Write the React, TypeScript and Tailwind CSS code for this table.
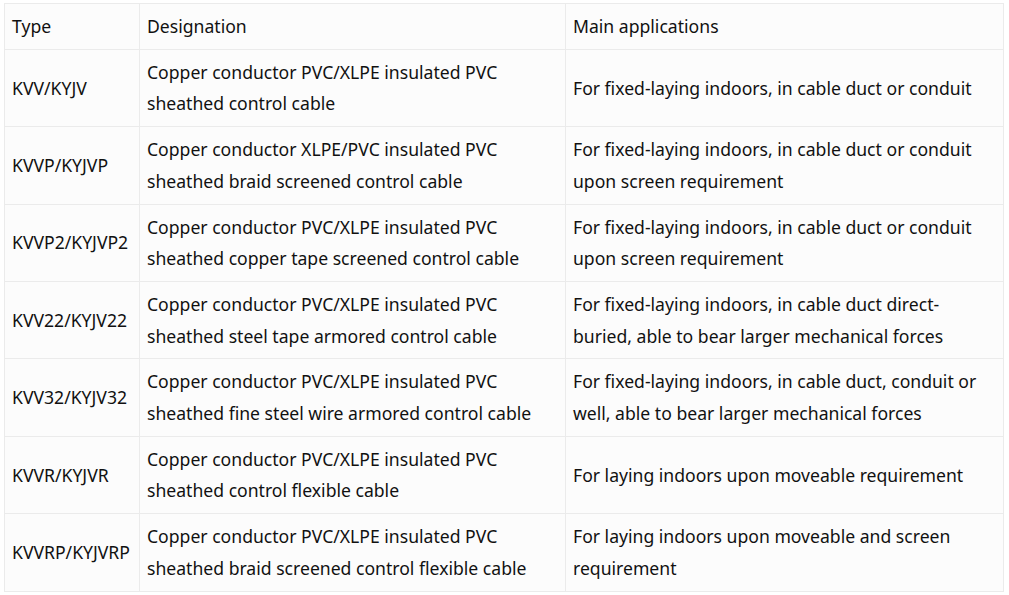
const rows: [string, string, string][] = [
  ['KVV/KYJV', 'Copper conductor PVC/XLPE insulated PVC sheathed control cable', 'For fixed-laying indoors, in cable duct or conduit'],
  ['KVVP/KYJVP', 'Copper conductor XLPE/PVC insulated PVC sheathed braid screened control cable', 'For fixed-laying indoors, in cable duct or conduit upon screen requirement'],
  ['KVVP2/KYJVP2', 'Copper conductor PVC/XLPE insulated PVC sheathed copper tape screened control cable', 'For fixed-laying indoors, in cable duct or conduit upon screen requirement'],
  ['KVV22/KYJV22', 'Copper conductor PVC/XLPE insulated PVC sheathed steel tape armored control cable', 'For fixed-laying indoors, in cable duct direct-buried, able to bear larger mechanical forces'],
  ['KVV32/KYJV32', 'Copper conductor PVC/XLPE insulated PVC sheathed fine steel wire armored control cable', 'For fixed-laying indoors, in cable duct, conduit or well, able to bear larger mechanical forces'],
  ['KVVR/KYJVR', 'Copper conductor PVC/XLPE insulated PVC sheathed control flexible cable', 'For laying indoors upon moveable requirement'],
  ['KVVRP/KYJVRP', 'Copper conductor PVC/XLPE insulated PVC sheathed braid screened control flexible cable', 'For laying indoors upon moveable and screen requirement'],
]

const cell = 'border border-[#ebebeb] px-[7px] pt-[7px] pb-[6px] align-middle'

export default function App() {
  return (
    <div className="min-h-screen bg-white pl-[4px] pt-[3px] font-['Noto_Sans',sans-serif] text-[17.6px] leading-[31.7px] text-[#111]">
      <table className="w-[1000px] border-collapse bg-[#fcfcfc] table-fixed">
        <colgroup>
          <col className="w-[135px]" />
          <col className="w-[426px]" />
          <col />
        </colgroup>
        <thead>
          <tr>
            <th className={`${cell} text-left font-normal`}>Type</th>
            <th className={`${cell} text-left font-normal`}>Designation</th>
            <th className={`${cell} text-left font-normal`}>Main applications</th>
          </tr>
        </thead>
        <tbody>
          {rows.map(([type, des, app]) => (
            <tr key={type}>
              <td className={cell}>{type}</td>
              <td className={cell}>{des}</td>
              <td className={cell}>{app}</td>
            </tr>
          ))}
        </tbody>
      </table>
    </div>
  )
}
